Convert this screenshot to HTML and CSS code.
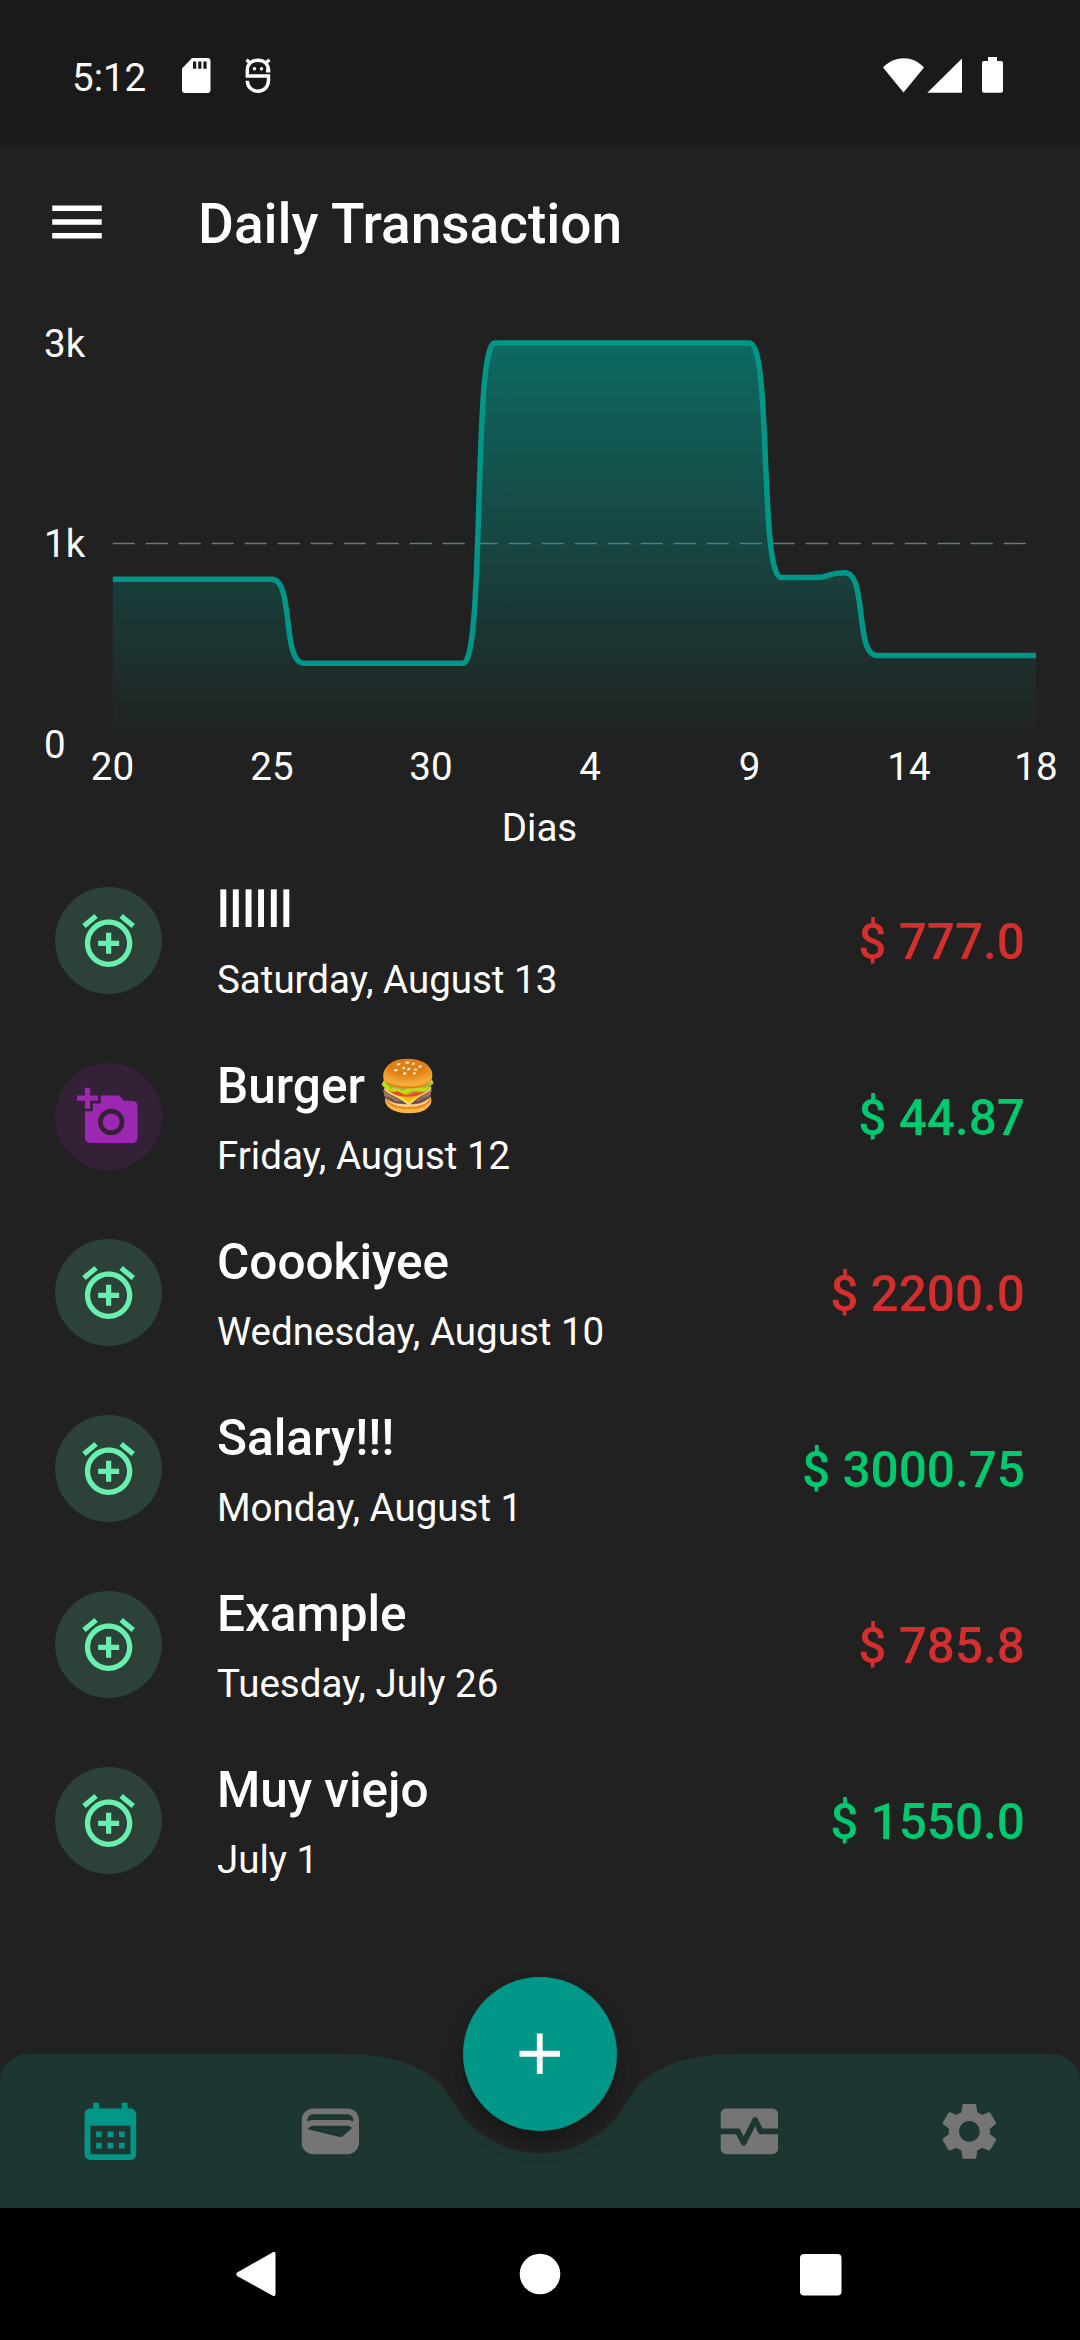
FILE: index.html
```html
<!DOCTYPE html>
<html lang="en">
<head>
<meta charset="utf-8">
<title>Daily Transaction</title>
<link rel="stylesheet" href="styles.css">
</head>
<body>
<svg class="defs" aria-hidden="true">
  <symbol id="alarm" viewBox="0 0 24 24"><path d="M7.88 3.39L6.6 1.86 2 5.71l1.29 1.53 4.59-3.85zM22 5.72l-4.6-3.86-1.29 1.53 4.6 3.86L22 5.72zM12 4c-4.97 0-9 4.03-9 9s4.02 9 9 9c4.97 0 9-4.03 9-9s-4.03-9-9-9zm0 16c-3.87 0-7-3.13-7-7s3.13-7 7-7 7 3.13 7 7-3.13 7-7 7zm1-11h-2v3H8v2h3v3h2v-3h3v-2h-3V9z"/></symbol>
  <symbol id="camera" viewBox="0 0 24 24"><path d="M3 4V1h2v3h3v2H5v3H3V6H0V4h3zm3 6V7h3V4h7l1.83 2H21c1.1 0 2 .9 2 2v12c0 1.1-.9 2-2 2H5c-1.1 0-2-.9-2-2V10h3zm7 9c2.76 0 5-2.24 5-5s-2.24-5-5-5-5 2.24-5 5 2.24 5 5 5zm-3.2-5c0 1.77 1.43 3.2 3.2 3.2s3.2-1.43 3.2-3.2-1.43-3.2-3.2-3.2-3.2 1.43-3.2 3.2z"/></symbol>
</svg>

<div class="status">
  <span class="clock">5:12</span>
  <svg class="sd" viewBox="0 0 29 35"><path fill-rule="evenodd" d="M10 0H25.500a3 3 0 0 1 3 3V32a3 3 0 0 1-3 3H3a3 3 0 0 1-3-3V10.500zM11 3.500V10.800h3.200V3.500zm5.200 0V10.800h3.200V3.500zm5.200 0V10.800h3.200V3.500z"/></svg>
  <svg class="bug" viewBox="0 0 26 35"><path class="bug-line" d="M23.500 13C23.500 6 19 2.200 13 2.200S2.300 6 2.300 12V18H23.500V22c0 7-4.500 11.200-10.500 11.200S2.300 29 2.300 22.800M1.500 1.800l4 3.500M24.500 1.800l-4 3.500M25.300 12.800H21"/><circle cx="9.500" cy="10.800" r="1.700"/><circle cx="16.500" cy="10.800" r="1.700"/></svg>
  <svg class="signals" viewBox="0 0 121 36"><path d="M0 10.500C12-1.800 29.500-1.800 41 10.500L20.500 35.500zM44.300 35.700L79 1.500V35.700zM105 0h9v4h4a2 2 0 0 1 2 2V33.700a2 2 0 0 1-2 2H101a2 2 0 0 1-2-2V6a2 2 0 0 1 2-2h4z"/></svg>
</div>

<header class="appbar">
  <svg class="menu" viewBox="0 0 24 24"><path d="M3 18h18v-2H3v2zm0-5h18v-2H3v2zm0-7v2h18V6H3z"/></svg>
  <h1>Daily Transaction</h1>
</header>

<svg class="chart" viewBox="0 299 1080 554">
  <defs>
    <linearGradient id="fill" gradientUnits="userSpaceOnUse" x1="0" y1="343" x2="0" y2="744">
      <stop offset="0" stop-color="#009688" stop-opacity=".62"/>
      <stop offset="1" stop-color="#009688" stop-opacity="0"/>
    </linearGradient>
  </defs>
  <path class="dash" d="M112.750 543.500H1036"/>
  <path fill="url(#fill)" d="M112.750 579.300H271.900C294.200 579.300 281.500 663.200 303.800 663.200H463C485.300 663.200 472.500 343 494.800 343H749.500C771.800 343 759.100 577.500 781.400 577.500H813.200C832.300 577.500 826 572.800 845 572.800C867.300 572.800 854.600 655.400 876.900 655.400H1036V744H112.750z"/>
  <path class="line" d="M112.750 579.300H271.900C294.200 579.300 281.500 663.200 303.800 663.200H463C485.300 663.200 472.500 343 494.800 343H749.500C771.800 343 759.100 577.500 781.400 577.500H813.200C832.300 577.500 826 572.800 845 572.800C867.300 572.800 854.600 655.400 876.900 655.400H1036"/>
  <g class="labels">
    <text x="44" y="356.500">3k</text>
    <text x="44" y="556.500">1k</text>
    <text x="44" y="757.500">0</text>
  </g>
  <g class="labels middle">
    <text x="112.500" y="779.500">20</text>
    <text x="272" y="779.500">25</text>
    <text x="431" y="779.500">30</text>
    <text x="590" y="779.500">4</text>
    <text x="749.500" y="779.500">9</text>
    <text x="909" y="779.500">14</text>
    <text x="1036" y="779.500">18</text>
    <text x="539.500" y="840.500">Dias</text>
  </g>
</svg>

<main class="list">
  <article class="row">
    <div class="badge green"><svg><use href="#alarm"/></svg></div>
    <div class="info"><h2>llllll</h2><p>Saturday, August 13</p></div>
    <strong class="out">$ 777.0</strong>
  </article>
  <article class="row">
    <div class="badge purple"><svg><use href="#camera"/></svg></div>
    <div class="info"><h2>Burger 🍔</h2><p>Friday, August 12</p></div>
    <strong class="in">$ 44.87</strong>
  </article>
  <article class="row">
    <div class="badge green"><svg><use href="#alarm"/></svg></div>
    <div class="info"><h2>Coookiyee</h2><p>Wednesday, August 10</p></div>
    <strong class="out">$ 2200.0</strong>
  </article>
  <article class="row">
    <div class="badge green"><svg><use href="#alarm"/></svg></div>
    <div class="info"><h2>Salary!!!</h2><p>Monday, August 1</p></div>
    <strong class="in">$ 3000.75</strong>
  </article>
  <article class="row">
    <div class="badge green"><svg><use href="#alarm"/></svg></div>
    <div class="info"><h2>Example</h2><p>Tuesday, July 26</p></div>
    <strong class="out">$ 785.8</strong>
  </article>
  <article class="row">
    <div class="badge green"><svg><use href="#alarm"/></svg></div>
    <div class="info"><h2>Muy viejo</h2><p>July 1</p></div>
    <strong class="in">$ 1550.0</strong>
  </article>
</main>

<nav class="tabs">
  <svg class="tabs-shape" viewBox="0 0 1080 154"><path d="M0 154V27.500A27.500 27.500 0 0 1 27.500 0H344.750Q427.250 0 453.100 47.400A99 99 0 0 0 626.900 47.400Q652.750 0 735.250 0H1052.500A27.500 27.500 0 0 1 1080 27.500V154z"/></svg>
  <a class="tab active"><svg viewBox="0 0 24 24"><path d="M19 4h-1V2h-2v2H8V2H6v2H5c-1.110 0-1.990.9-1.990 2L3 20c0 1.100.89 2 2 2h14c1.100 0 2-.9 2-2V6c0-1.100-.9-2-2-2zm0 16H5V10h14v10zM9 14H7v-2h2v2zm4 0h-2v-2h2v2zm4 0h-2v-2h2v2zm-8 4H7v-2h2v2zm4 0h-2v-2h2v2zm4 0h-2v-2h2v2z"/></svg></a>
  <a class="tab"><svg viewBox="0 0 24 24"><path d="M18 4H6C3.790 4 2 5.790 2 8v8c0 2.210 1.790 4 4 4h12c2.210 0 4-1.790 4-4V8c0-2.210-1.790-4-4-4zm-1.860 9.770c-.24.2-.57.28-.88.2L4.150 11.250C4.450 10.520 5.160 10 6 10h12c.67 0 1.260.34 1.630.84l-3.490 2.930zM20 8.550c-.59-.34-1.270-.55-2-.55H6c-.73 0-1.410.21-2 .55V8c0-1.100.9-2 2-2h12c1.100 0 2 .9 2 2v.55z"/></svg></a>
  <button class="fab" aria-label="Add"><svg viewBox="0 0 24 24"><path d="M19 13h-6v6h-2v-6H5v-2h6V5h2v6h6v2z"/></svg></button>
  <a class="tab"><svg viewBox="0 0 24 24"><path d="M15.110 12.450L14 10.240l-3.110 6.210c-.16.34-.51.55-.89.55s-.73-.21-.89-.55L7.380 13H2v5c0 1.100.9 2 2 2h16c1.100 0 2-.9 2-2v-5h-6c-.38 0-.73-.21-.89-.55zM20 4H4c-1.100 0-2 .9-2 2v5h6c.38 0 .73.21.89.55L10 13.760l3.110-6.210c.34-.68 1.450-.68 1.790 0L16.620 11H22V6c0-1.100-.9-2-2-2z"/></svg></a>
  <a class="tab"><svg viewBox="0 0 24 24"><path d="M19.14,12.94c0.04-0.3,0.06-0.61,0.06-0.94c0-0.32-0.02-0.64-0.07-0.94l2.03-1.58c0.18-0.14,0.23-0.41,0.12-0.61l-1.92-3.32c-0.12-0.22-0.37-0.29-0.59-0.22l-2.39,0.96c-0.5-0.38-1.03-0.7-1.62-0.94L14.4,2.81c-0.04-0.24-0.24-0.41-0.48-0.41h-3.84c-0.24,0-0.43,0.17-0.47,0.41L9.25,5.35C8.66,5.59,8.12,5.92,7.63,6.29L5.24,5.33c-0.22-0.08-0.47,0-0.59,0.22L2.74,8.87C2.62,9.08,2.66,9.34,2.86,9.48l2.03,1.58C4.84,11.36,4.8,11.69,4.8,12s0.02,0.64,0.07,0.94l-2.03,1.58c-0.18,0.14-0.23,0.41-0.12,0.61l1.92,3.32c0.12,0.22,0.37,0.29,0.59,0.22l2.39-0.96c0.5,0.38,1.03,0.7,1.62,0.94l0.36,2.54c0.05,0.24,0.24,0.41,0.48,0.41h3.84c0.24,0,0.44-0.17,0.47-0.41l0.36-2.54c0.59-0.24,1.13-0.56,1.62-0.94l2.39,0.96c0.22,0.08,0.47,0,0.59-0.22l1.92-3.32c0.12-0.22,0.07-0.47-0.12-0.61L19.14,12.94z M12,15.6c-1.98,0-3.6-1.62-3.6-3.6s1.62-3.6,3.6-3.6s3.6,1.62,3.6,3.6S13.98,15.6,12,15.6z"/></svg></a>
</nav>

<footer class="system">
  <svg viewBox="0 0 48 48"><path d="M1.600 22.300L36.800 2.200Q39.500 1 39.500 4V44Q39.500 47 36.800 45.800L1.600 26.200Q-.8 24.300 1.600 22.300z"/></svg>
  <svg viewBox="0 0 48 48"><circle cx="24" cy="24" r="20.300"/></svg>
  <svg viewBox="0 0 48 48"><rect x="4" y="4" width="41.500" height="41.500" rx="4"/></svg>
</footer>
</body>
</html>
```

FILE: styles.css
```css
* { box-sizing: border-box; margin: 0; padding: 0; }

body {
  display: flex;
  flex-direction: column;
  width: 1080px;
  height: 2340px;
  overflow: hidden;
  background: #212121;
  color: #fff;
  font-family: Roboto, "Noto Color Emoji", sans-serif;
  font-size: 38.5px;
}

svg { display: block; fill: currentColor; flex: none; }
.defs { width: 0; height: 0; position: absolute; }

/* status bar */
.status {
  height: 145px;
  flex: none;
  background: #1a1a1a;
  display: flex;
  align-items: flex-start;
  padding: 58px 76px 0 72px;
}
.clock { width: 110px; line-height: 36px; margin-top: 2px; }
.sd { width: 29px; height: 35px; }
.bug { width: 26px; height: 35px; margin-left: 34px; }
.bug-line { fill: none; stroke: currentColor; stroke-width: 3.4; }
.signals { width: 121px; height: 36px; margin: -1px 0 0 auto; }

/* app bar */
.appbar {
  height: 154px;
  flex: none;
  display: flex;
  align-items: center;
  padding: 0 44px;
  gap: 88px;
}
.menu { width: 66px; height: 66px; }
h1 { font-size: 55px; font-weight: 500; line-height: 64px; padding-top: 3px; }

/* chart */
.chart { width: 1080px; height: 554px; }
.line { fill: none; stroke: #009688; stroke-width: 5.5; }
.dash { fill: none; stroke: #607d8b; stroke-width: 1.4; stroke-dasharray: 22 11; }
.labels { fill: #fff; }
.middle { text-anchor: middle; }

/* transactions */
.list { flex: 1; }
.row {
  height: 176px;
  display: flex;
  align-items: center;
  padding: 0 55px;
}
.badge {
  width: 107px;
  height: 107px;
  margin-bottom: 1px;
  border-radius: 50%;
  display: flex;
  align-items: center;
  justify-content: center;
}
.badge svg { width: 63.25px; height: 63.25px; }
.green { background: #2c4238; color: #69f0ae; }
.purple { background: #342138; color: #9c27b0; }
.info { flex: 1; margin-left: 55px; display: flex; flex-direction: column; gap: 18px; }
h2 { font-size: 49.5px; font-weight: 500; line-height: 58px; }
.info p { line-height: 45px; }
.row strong { font-size: 49.5px; font-weight: 500; line-height: 58px; padding-top: 2px; }
.out { color: #d32f2f; }
.in { color: #00c96f; }

/* bottom tabs */
.tabs {
  position: relative;
  height: 154px;
  flex: none;
  display: flex;
  color: #757575;
}
.tabs-shape { position: absolute; inset: 0; width: 1080px; height: 154px; color: #1e3632; }
.tab { position: relative; flex: 1; display: flex; align-items: center; justify-content: center; }
.tab svg { width: 68.75px; height: 68.75px; }
.active { color: #009688; }
.fab {
  position: relative;
  width: 154px;
  height: 154px;
  margin: -77px 22px 0;
  border: 0;
  border-radius: 50%;
  background: #009688;
  color: #fff;
  display: flex;
  align-items: center;
  justify-content: center;
  box-shadow: 0 8px 14px -3px rgba(0,0,0,.22), 0 13px 24px -2px rgba(0,0,0,.18);
}
.fab svg { width: 69.5px; height: 69.5px; }

/* system navigation */
.system {
  height: 132px;
  flex: none;
  background: #000;
  display: flex;
  align-items: center;
  justify-content: center;
  gap: 232px;
}
.system svg { width: 48px; height: 48px; overflow: visible; }
```
